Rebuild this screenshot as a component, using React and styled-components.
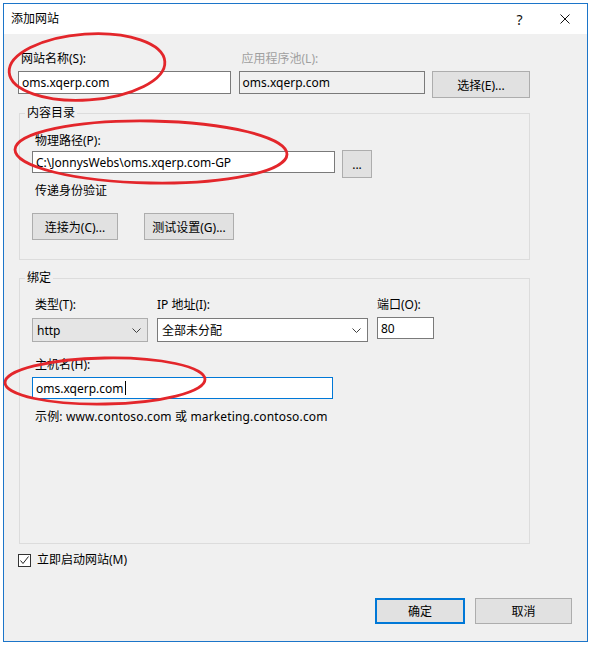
import styled, { createGlobalStyle } from "styled-components"

const GlobalStyle = createGlobalStyle`
    * { box-sizing: border-box; }
    body {
        margin: 0;
        background: #ffffff;
        font-family: "Noto Sans", "Noto Sans CJK SC", sans-serif;
        font-size: 12px;
        color: #000;
    }
`

const Page = styled.div`
    position: relative;
    width: 591px;
    height: 646px;
    padding: 3px 0 0 3px;
    overflow: hidden;
`

const Dialog = styled.div`
    width: 585px;
    height: 639px;
    border: 1px solid #1c75c9;
    display: flex;
    flex-direction: column;
    background: #f0f0f0;
`

const TitleBar = styled.div`
    height: 30px;
    flex-shrink: 0;
    background: #ffffff;
    display: flex;
    align-items: center;
    padding-left: 7px;
`

const Title = styled.div`
    flex: 1;
    font-size: 12px;
    line-height: 16px;
`

const CaptionButton = styled.div`
    width: 45px;
    height: 30px;
    display: flex;
    align-items: center;
    justify-content: center;
    font-size: 14px;
    color: #111;
`

const Body = styled.div`
    flex: 1;
    padding: 17px 15px 0 14px;
`

const Label = styled.div`
    font-size: 12px;
    line-height: 16px;
    height: 16px;
    white-space: nowrap;
    padding-left: ${(p) => p.indent || 0}px;
    color: ${(p) => (p.disabled ? "#a0a0a0" : "#000")};
    letter-spacing: ${(p) => p.spread || 0}px;
`

const TopGrid = styled.div`
    display: grid;
    grid-template-columns: 213px 186px 98px;
    justify-content: space-between;
    row-gap: 4px;
    align-items: start;
    width: 512px;
`

const TextBox = styled.div`
    height: ${(p) => p.h || 23}px;
    width: ${(p) => (p.w ? p.w + "px" : "auto")};
    border: 1px solid ${(p) => (p.focused ? "#0078d7" : "#7a7a7a")};
    background: ${(p) => (p.disabled ? "#f0f0f0" : "#ffffff")};
    margin-top: ${(p) => p.mt || 0}px;
    display: flex;
    align-items: center;
    padding-left: 3px;
    font-size: 12px;
    white-space: nowrap;
    overflow: hidden;
`

const Caret = styled.span`
    display: inline-block;
    width: 1px;
    height: 14px;
    background: #000;
    margin-left: 1px;
`

const Button = styled.div`
    width: ${(p) => p.w}px;
    height: ${(p) => p.h || 27}px;
    background: #e1e1e1;
    border: ${(p) => (p.primary ? "2px solid #0078d7" : "1px solid #adadad")};
    display: flex;
    align-items: center;
    justify-content: center;
    font-size: 12px;
    white-space: nowrap;
    margin-left: ${(p) => p.ml || 0}px;
`

const GroupBox = styled.fieldset`
    margin: ${(p) => p.mt}px 0 0 1px;
    width: 511px;
    border: 1px solid #dcdcdc;
    padding: ${(p) => p.pt}px 0 ${(p) => p.pb}px 12px;
    min-width: 0;
`

const Legend = styled.legend`
    font-size: 12px;
    line-height: 16px;
    padding: 0 2px;
    margin-left: -7px;
`

const Row = styled.div`
    display: flex;
    align-items: flex-start;
    margin-top: ${(p) => p.mt || 0}px;
`

const Spacer = styled.div`
    height: ${(p) => p.h}px;
`

const BindingGrid = styled.div`
    display: grid;
    grid-template-columns: 116px 211px 57px;
    column-gap: 9px;
    row-gap: 4px;
    align-items: start;
`

const Select = styled.div`
    height: 24px;
    margin-top: 1px;
    border: 1px solid ${(p) => (p.flat ? "#adadad" : "#7a7a7a")};
    background: ${(p) => (p.flat ? "#e5e5e5" : "#ffffff")};
    display: flex;
    align-items: center;
    padding: 0 6px 0 4px;
    font-size: 12px;
`

const SelectText = styled.div`
    flex: 1;
    white-space: nowrap;
`

const CheckRow = styled.div`
    display: flex;
    align-items: center;
    margin-top: 8px;
    height: 16px;
`

const CheckBox = styled.div`
    width: 13px;
    height: 13px;
    border: 1px solid #333;
    background: #ffffff;
    display: flex;
    align-items: center;
    justify-content: center;
    margin-right: 6px;
`

const Footer = styled.div`
    display: flex;
    justify-content: flex-end;
    gap: 10px;
    margin-top: 30px;
`

const Marks = styled.svg`
    position: absolute;
    left: 0;
    top: 0;
    pointer-events: none;
`

const Chevron = () => (
    <svg width="9" height="5" viewBox="0 0 9 5">
        <polyline points="0.5,0.5 4.5,4.5 8.5,0.5" fill="none" stroke="#404040" strokeWidth="1" />
    </svg>
)

const App = () => {
    return (
        <Page>
            <GlobalStyle />
            <Dialog>
                <TitleBar>
                    <Title>添加网站</Title>
                    <CaptionButton>?</CaptionButton>
                    <CaptionButton>
                        <svg width="10" height="10" viewBox="0 0 10 10">
                            <path d="M0.5 0.5 L9.5 9.5 M9.5 0.5 L0.5 9.5" stroke="#111" strokeWidth="1" />
                        </svg>
                    </CaptionButton>
                </TitleBar>
                <Body>
                    <TopGrid>
                        <Label indent={3}>网站名称(S):</Label>
                        <Label indent={3} disabled>应用程序池(L):</Label>
                        <div />
                        <TextBox>oms.xqerp.com</TextBox>
                        <TextBox disabled>oms.xqerp.com</TextBox>
                        <Button w={98}>选择(E)...</Button>
                    </TopGrid>

                    <GroupBox mt={7} pt={12} pb={19}>
                        <Legend>内容目录</Legend>
                        <Label indent={3}>物理路径(P):</Label>
                        <Row mt={1}>
                            <TextBox w={303} h={22} mt={1}>C:\JonnysWebs\oms.xqerp.com-GP</TextBox>
                            <Button w={30} h={28} ml={7}>...</Button>
                        </Row>
                        <Spacer h={5} />
                        <Label indent={3}>传递身份验证</Label>
                        <Row mt={14}>
                            <Button w={86}>连接为(C)...</Button>
                            <Button w={90} ml={26}>测试设置(G)...</Button>
                        </Row>
                    </GroupBox>

                    <GroupBox mt={10} pt={11} pb={118}>
                        <Legend>绑定</Legend>
                        <BindingGrid>
                            <Label indent={3}>类型(T):</Label>
                            <Label>IP 地址(I):</Label>
                            <Label>端口(O):</Label>
                            <Select flat>
                                <SelectText>http</SelectText>
                                <Chevron />
                            </Select>
                            <Select>
                                <SelectText>全部未分配</SelectText>
                                <Chevron />
                            </Select>
                            <TextBox h={22}>80</TextBox>
                        </BindingGrid>
                        <Spacer h={15} />
                        <Label indent={3}>主机名(H):</Label>
                        <TextBox w={301} h={22} mt={4} focused>
                            oms.xqerp.com<Caret />
                        </TextBox>
                        <Spacer h={10} />
                        <Label indent={3} spread={0.15}>示例: www.contoso.com 或 marketing.contoso.com</Label>
                    </GroupBox>

                    <CheckRow>
                        <CheckBox>
                            <svg width="11" height="11" viewBox="0 0 11 11">
                                <polyline points="1.5,5.5 4,8.5 9.5,1.5" fill="none" stroke="#222" strokeWidth="1" />
                            </svg>
                        </CheckBox>
                        <Label>立即启动网站(M)</Label>
                    </CheckRow>

                    <Footer>
                        <Button w={90} h={26} primary>确定</Button>
                        <Button w={97} h={26}>取消</Button>
                    </Footer>
                </Body>
            </Dialog>

            <Marks width="591" height="646" viewBox="0 0 591 646">
                <g fill="none" stroke="#e3262b" strokeWidth="2.8">
                    <ellipse cx="87" cy="67" rx="78" ry="33" transform="rotate(-4 87 67)" />
                    <ellipse cx="151" cy="152" rx="136" ry="31" transform="rotate(1 151 152)" />
                    <ellipse cx="105" cy="381" rx="100" ry="23" transform="rotate(-1 105 381)" />
                </g>
            </Marks>
        </Page>
    )
}

export default App
